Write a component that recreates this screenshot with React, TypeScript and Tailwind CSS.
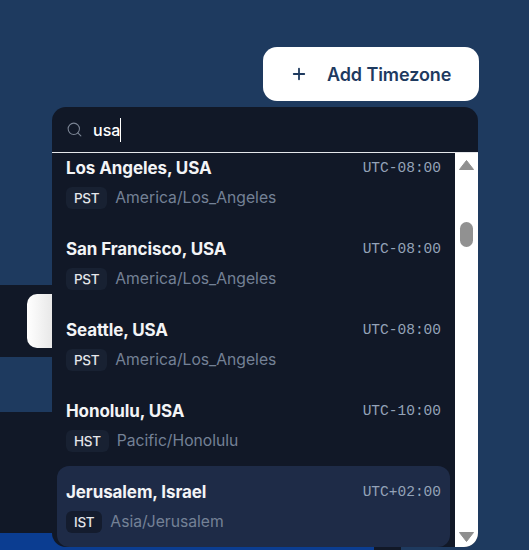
import { Plus, Search } from 'lucide-react'

const zones = [
  { city: 'Los Angeles, USA', abbr: 'PST', zone: 'America/Los_Angeles', offset: 'UTC-08:00' },
  { city: 'San Francisco, USA', abbr: 'PST', zone: 'America/Los_Angeles', offset: 'UTC-08:00' },
  { city: 'Seattle, USA', abbr: 'PST', zone: 'America/Los_Angeles', offset: 'UTC-08:00' },
  { city: 'Honolulu, USA', abbr: 'HST', zone: 'Pacific/Honolulu', offset: 'UTC-10:00' },
  { city: 'Jerusalem, Israel', abbr: 'IST', zone: 'Asia/Jerusalem', offset: 'UTC+02:00', active: true },
]

function ZoneRow({ city, abbr, zone, offset, active }: (typeof zones)[number] & { active?: boolean }) {
  return (
    <div className={`h-[81px] shrink-0 rounded-xl pl-[9px] pr-[9px] pt-[16px] ${active ? 'bg-[#1e2b47]' : ''}`}>
      <div className="flex items-center justify-between h-[22px]">
        <span className="text-[17px] font-bold text-[#f3f4f6] tracking-[-0.1px]">{city}</span>
        <span className="font-['Liberation_Mono',monospace] text-[14.5px] text-[#94a3b8]">{offset}</span>
      </div>
      <div className="flex items-center gap-[8px] mt-[6px]">
        <span className={`h-[22px] flex items-center px-[8px] rounded-md text-[13.5px] font-medium tracking-[-0.3px] text-[#e5e7eb] ${active ? 'bg-[#141c2e]' : 'bg-[#182132]'}`}>
          {abbr}
        </span>
        <span className="text-[15.7px] text-[#748196]">{zone}</span>
      </div>
    </div>
  )
}

export default function App() {
  return (
    <div className="relative w-[529px] h-[550px] overflow-hidden bg-[#1e3a5f] font-['Inter',sans-serif]">
      <div className="flex justify-end pt-[47px] pr-[50px]">
        <button className="w-[216px] h-[54px] bg-white rounded-[14px] flex items-center pl-[27px] text-[#1e3a5f]">
          <Plus className="w-[18px] h-[18px]" strokeWidth={2.4} />
          <span className="ml-[19px] text-[18px] font-semibold tracking-[-0.1px]">Add Timezone</span>
        </button>
      </div>

      <div className="mt-[184px] w-[52px] h-[72px] bg-[#111827] flex items-center justify-end">
        <div className="w-[25px] h-[54px] bg-gradient-to-r from-white to-[#e8e8e8] rounded-l-[10px]" />
      </div>
      <div className="mt-[55px] w-[52px] h-[121px] bg-[#111827]" />
      <div className="h-[17px] flex">
        <div className="w-[374px] bg-[#0b3d91]" />
        <div className="w-[27px] bg-[#111827]" />
      </div>

      <div className="absolute left-[52px] top-[107px] w-[426px] h-[440px] rounded-[14px] overflow-hidden bg-[#111827] flex flex-col">
        <div className="h-[46px] shrink-0 flex items-center pl-[14px] border-b border-[#e5e7eb]">
          <Search className="w-[17px] h-[17px] text-[#7b8494]" strokeWidth={1.5} />
          <span className="ml-[10px] text-[16px] font-medium text-white">usa</span>
          <span className="w-px h-[24px] bg-white" />
        </div>
        <div className="flex-1 flex min-h-0">
          <div className="flex-1 px-[5px] overflow-hidden">
            <div className="-mt-[11px] flex flex-col">
              {zones.map((z) => (
                <ZoneRow key={z.city} {...z} />
              ))}
            </div>
          </div>
          <div className="w-[23px] bg-white flex flex-col items-center pt-[7px] pb-[5px]">
            <svg width="15" height="10" viewBox="0 0 15 10"><path d="M7.5 0.5 L14.5 9.5 H0.5 Z" fill="#8f8f8f" stroke="#8f8f8f" strokeLinejoin="round" /></svg>
            <div className="w-[13px] h-[25px] mt-[52px] rounded-full bg-[#919191]" />
            <div className="flex-1" />
            <svg width="15" height="10" viewBox="0 0 15 10"><path d="M0.5 0.5 H14.5 L7.5 9.5 Z" fill="#8f8f8f" stroke="#8f8f8f" strokeLinejoin="round" /></svg>
          </div>
        </div>
      </div>
    </div>
  )
}
